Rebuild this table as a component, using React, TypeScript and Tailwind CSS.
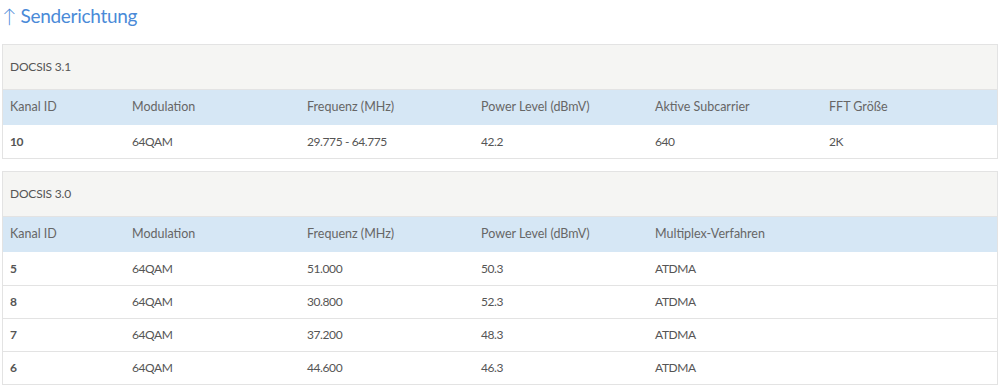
const cols = 'grid grid-cols-[122px_175px_174px_174px_174px_1fr]'

interface Section {
  title: string
  headers: string[]
  rows: string[][]
}

const sections: Section[] = [
  {
    title: 'DOCSIS 3.1',
    headers: ['Kanal ID', 'Modulation', 'Frequenz (MHz)', 'Power Level (dBmV)', 'Aktive Subcarrier', 'FFT Größe'],
    rows: [['10', '64QAM', '29.775 - 64.775', '42.2', '640', '2K']]
  },
  {
    title: 'DOCSIS 3.0',
    headers: ['Kanal ID', 'Modulation', 'Frequenz (MHz)', 'Power Level (dBmV)', 'Multiplex-Verfahren'],
    rows: [
      ['5', '64QAM', '51.000', '50.3', 'ATDMA'],
      ['8', '64QAM', '30.800', '52.3', 'ATDMA'],
      ['7', '64QAM', '37.200', '48.3', 'ATDMA'],
      ['6', '64QAM', '44.600', '46.3', 'ATDMA']
    ]
  }
]

const App = () => {
  return (
    <div className="w-[998px] h-[386px] bg-white pl-[2px] font-['Lato','Liberation_Sans',sans-serif] text-[12.5px] text-[#555]">
      <h2 className="h-[36px] pt-[3px] text-[19px] leading-[26px] tracking-[-0.3px] text-[#4a8ad8]">
        <span className="font-light">↑</span> Senderichtung
      </h2>

      <div className="flex flex-col gap-[12px] pt-[8px]">
        {sections.map(section => (
          <div key={section.title} className="border border-[#e3e3e3]">
            <div className="h-[45px] bg-[#f5f5f3] border-b border-[#e3e3e3] flex items-center px-[7px] text-[12px] tracking-[-0.2px] text-[#555]">
              {section.title}
            </div>
            <div className={`${cols} h-[35px] items-center bg-[#d6e7f5]`}>
              {section.headers.map(h => (
                <div key={h} className="px-[7px] text-[#666]">{h}</div>
              ))}
            </div>
            {section.rows.map((row, i) => (
              <div key={i} className={`${cols} h-[33px] items-center text-[12px] tracking-[-0.4px] ${i > 0 ? 'border-t border-[#e3e3e3]' : ''}`}>
                {row.map((cell, j) => (
                  <div key={j} className={`px-[7px] ${j === 0 ? 'font-bold' : ''}`}>{cell}</div>
                ))}
              </div>
            ))}
          </div>
        ))}
      </div>
    </div>
  )
}

export default App
